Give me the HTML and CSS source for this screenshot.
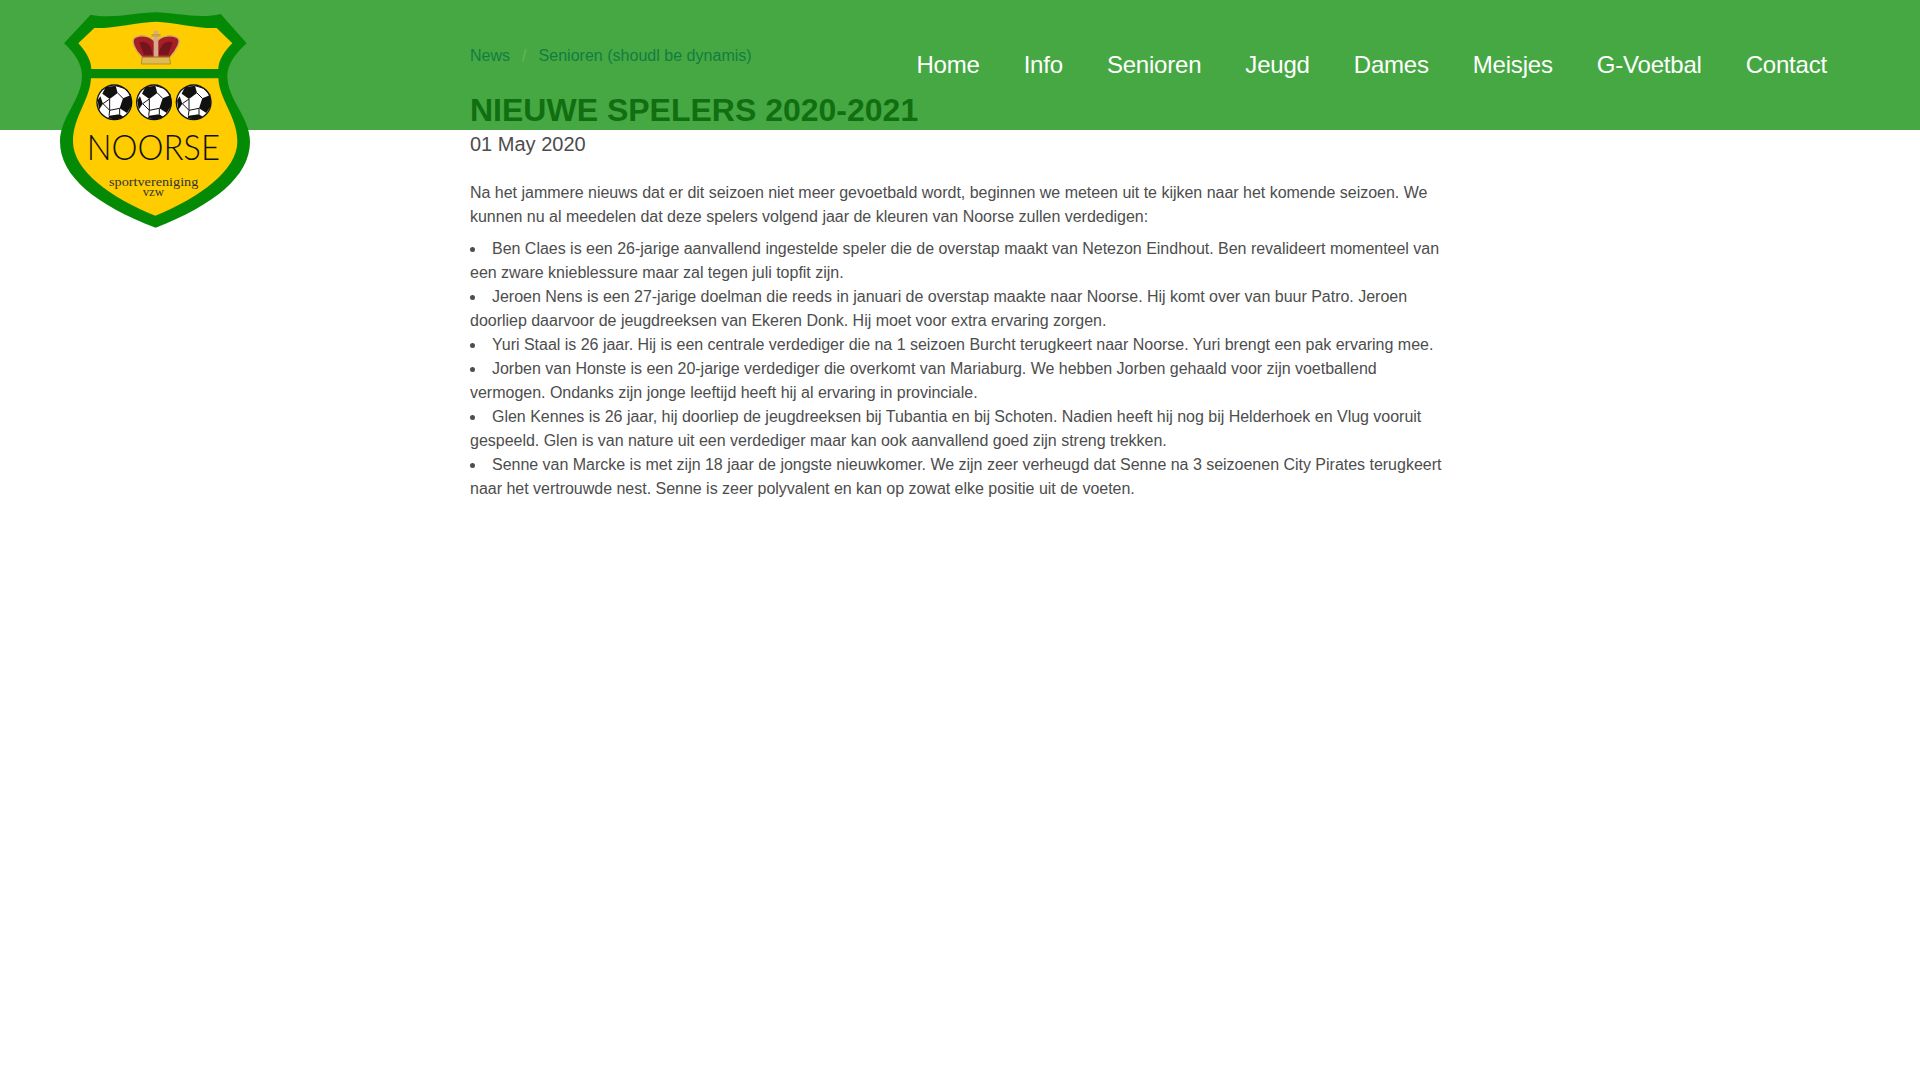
FILE: index.html
```html
<!DOCTYPE html>
<html lang="nl">
<head>
<meta charset="utf-8">
<title>Nieuwe spelers 2020-2021</title>
<link rel="stylesheet" href="styles.css">
</head>
<body>
<header class="site-header">
  <nav class="main-nav">
    <a href="#">Home</a>
    <a href="#">Info</a>
    <a href="#">Senioren</a>
    <a href="#">Jeugd</a>
    <a href="#">Dames</a>
    <a href="#">Meisjes</a>
    <a href="#">G-Voetbal</a>
    <a href="#">Contact</a>
  </nav>
</header>
<a class="logo" href="#" aria-label="Noorse sportvereniging vzw">
  <svg viewBox="0 0 690 720" width="230" height="240">
    <defs>
      <g id="ball">
        <circle r="54" fill="#111"/>
        <circle r="50" fill="#fff"/>
        <polygon points="-26,-46 4,-50 10,-28 -14,-10 -36,-26" fill="#111"/>
        <polygon points="26,-12 50,-22 52,10 38,32 16,18" fill="#111"/>
        <polygon points="-50,-6 -42,-18 -34,4 -46,22" fill="#111"/>
        <polygon points="-16,40 16,36 28,44 6,52 -18,48" fill="#111"/>
        <path d="M10,-28 26,-12M-14,-10-34,4M-14,24-34,4M-14,24 16,18M-14,24-16,40M16,36 16,18M-14,-10-14,24M4,-50 30,-42 50,-22" fill="none" stroke="#111" stroke-width="3"/>
      </g>
    </defs>
    <path class="shield-edge" d="M347 37C290 38 215 58 152 44L72 130C102 158 126 190 126 228C126 300 60 350 60 425C60 530 170 615 347 683C520 615 630 530 630 425C630 350 562 300 562 228C562 190 590 158 620 130L542 42C480 58 405 38 347 37Z"/>
    <path class="shield-fill" d="M347 65C290 67 220 86 163 84L115 130C135 152 153 178 154 207H535C536 178 555 152 577 130L530 84C470 86 405 67 347 65Z"/>
    <path class="shield-fill" d="M153 235H535C538 300 592 350 592 425C592 510 480 592 346 647C210 592 99 510 99 425C99 350 150 300 153 235Z"/>
    <path d="M306 172C284 150 272 122 284 113C300 103 332 106 347 128C362 106 396 103 412 113C426 122 410 150 390 172Z" fill="#a71f24" stroke="#cdb06a" stroke-width="4"/>
    <path d="M298 128C316 120 334 132 338 164H312ZM398 128C380 120 360 132 356 164H384Z" fill="#74141e"/>
    <rect x="341" y="92" width="14" height="78" fill="#d8a98c"/>
    <rect x="334" y="102" width="28" height="8" fill="#c9a43a"/>
    <path d="M306 172H388L392 192H304Z" fill="#e0bb52" stroke="#9a7a24" stroke-width="2"/>
    <use href="#ball" x="223" y="307"/>
    <use href="#ball" x="342" y="307"/>
    <use href="#ball" x="461" y="307"/>
    <text class="logo-name" x="340" y="481" text-anchor="middle" textLength="400" lengthAdjust="spacingAndGlyphs">NOORSE</text>
    <text class="logo-sub" x="341" y="557" text-anchor="middle" textLength="268" lengthAdjust="spacingAndGlyphs">sportvereniging</text>
    <text class="logo-sub" x="340" y="589" text-anchor="middle" textLength="64" lengthAdjust="spacingAndGlyphs">vzw</text>
  </svg>
</a>
<main class="content">
  <ol class="breadcrumb">
    <li><a href="#">News</a></li>
    <li class="sep">/</li>
    <li><a href="#">Senioren (shoudl be dynamis)</a></li>
  </ol>
  <h1 class="title">NIEUWE SPELERS 2020-2021</h1>
  <p class="date">01 May 2020</p>
  <p class="intro">Na het jammere nieuws dat er dit seizoen niet meer gevoetbald wordt, beginnen we meteen uit te kijken naar het komende seizoen. We kunnen nu al meedelen dat deze spelers volgend jaar de kleuren van Noorse zullen verdedigen:</p>
  <ul class="players">
    <li>Ben Claes is een 26-jarige aanvallend ingestelde speler die de overstap maakt van Netezon Eindhout. Ben revalideert momenteel van een zware knieblessure maar zal tegen juli topfit zijn.</li>
    <li>Jeroen Nens is een 27-jarige doelman die reeds in januari de overstap maakte naar Noorse. Hij komt over van buur Patro. Jeroen doorliep daarvoor de jeugdreeksen van Ekeren Donk. Hij moet voor extra ervaring zorgen.</li>
    <li>Yuri Staal is 26 jaar. Hij is een centrale verdediger die na 1 seizoen Burcht terugkeert naar Noorse. Yuri brengt een pak ervaring mee.</li>
    <li>Jorben van Honste is een 20-jarige verdediger die overkomt van Mariaburg. We hebben Jorben gehaald voor zijn voetballend vermogen. Ondanks zijn jonge leeftijd heeft hij al ervaring in provinciale.</li>
    <li>Glen Kennes is 26 jaar, hij doorliep de jeugdreeksen bij Tubantia en bij Schoten. Nadien heeft hij nog bij Helderhoek en Vlug vooruit gespeeld. Glen is van nature uit een verdediger maar kan ook aanvallend goed zijn streng trekken.</li>
    <li>Senne van Marcke is met zijn 18 jaar de jongste nieuwkomer. We zijn zeer verheugd dat Senne na 3 seizoenen City Pirates terugkeert naar het vertrouwde nest. Senne is zeer polyvalent en kan op zowat elke positie uit de voeten.</li>
  </ul>
</main>
</body>
</html>
```
FILE: styles.css
```css
* { box-sizing: border-box; }
html, body { margin: 0; padding: 0; }
body {
  position: relative;
  min-height: 1080px;
  background: #fff;
  color: #4d4d4d;
  font-family: "Liberation Sans", Arial, sans-serif;
  font-size: 16px;
  line-height: 24px;
}
a { color: inherit; text-decoration: none; }

.site-header {
  height: 130px;
  background: #46a843;
  display: flex;
  justify-content: flex-end;
  align-items: center;
  padding-right: 93px;
}
.main-nav { display: flex; gap: 44px; }
.main-nav a { color: #fff; font-size: 24px; line-height: 30px; letter-spacing: -0.2px; }

.logo { position: absolute; left: 40px; top: 0; display: block; line-height: 0; }
.shield-edge { fill: #058a05; }
.shield-fill { fill: #fc0; }
.logo-name { font-family: "Lato", sans-serif; font-weight: 300; font-size: 106px; fill: #111; }
.logo-sub { font-family: "Liberation Serif", serif; font-size: 37px; fill: #333; }

.content {
  position: relative;
  width: 974px;
  margin: -130px 0 0 470px;
  padding-top: 44px;
}
.breadcrumb {
  display: flex;
  gap: 12px;
  margin: 0;
  padding: 0;
  list-style: none;
  color: #137d40;
  height: 24px;
}
.breadcrumb a { letter-spacing: 0.02px; }
.breadcrumb .sep { color: #6cb45f; }
.title {
  margin: 22px 0 0;
  color: #116f11;
  font-size: 32px;
  line-height: 40px;
  font-weight: 700;
}
.date { margin: 0; font-size: 20px; line-height: 28px; }
.intro { margin: 23px 0 8px; letter-spacing: -0.015px; }
.players { margin: 0; padding: 0; list-style-position: inside; letter-spacing: -0.015px; }
```
